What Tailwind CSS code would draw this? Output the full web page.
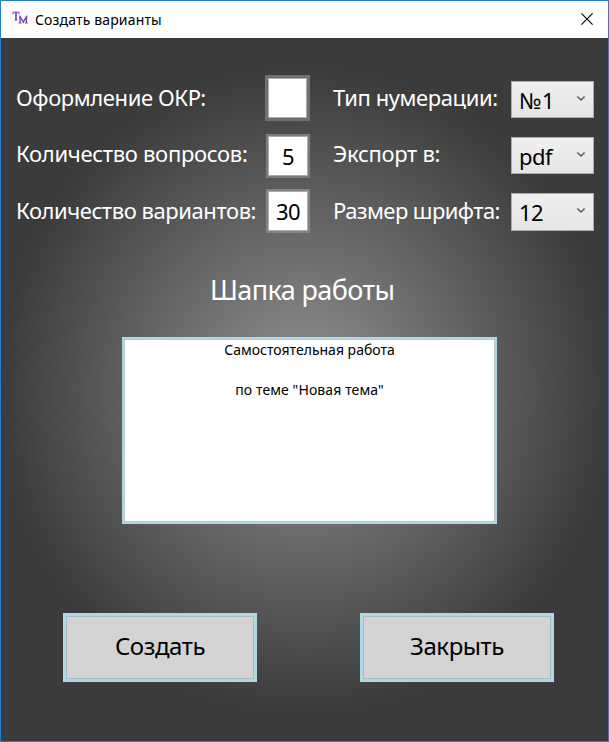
<!DOCTYPE html>
<html lang="ru"><head><meta charset="utf-8"><title>Создать варианты</title>
<script src="https://cdn.jsdelivr.net/npm/@tailwindcss/browser@4"></script></head>
<body class="h-[742px] w-[609px] overflow-hidden font-['Noto_Sans',sans-serif]">
<div class="flex h-[742px] w-[609px] flex-col border border-[#1c82d8]">
<header class="flex h-[37px] shrink-0 items-center bg-white pl-[11px] pr-[15px]">
<svg class="-mt-[3px] mr-[7px] h-[14px] w-4 shrink-0" viewBox="0 0 16 14" fill="none" stroke="#7b45b5"><path d="M1 3.5V1.2H7V3.5M2.5 9H5.5" /><path stroke-width="1.7" d="M4 1V9"/><path stroke-width="1.4" d="M8 5.5L11.3 11L14.5 5.5M8 5V12M14.4 5V12"/><path d="M6.5 12H9.5M12.8 12H15.7M7 5.2H8.5M14 5.2H15.6"/></svg>
<h1 class="whitespace-nowrap text-[14px] leading-5 tracking-[0.15px]">Создать варианты</h1>
<svg class="-mt-px ml-auto h-3 w-3" viewBox="0 0 12 12" stroke="#000" stroke-width="1.1"><path d="M.4 .4L11.6 11.6M11.6 .4L.4 11.6"/></svg>
</header>
<main class="flex min-h-0 flex-1 flex-col bg-[radial-gradient(ellipse_306px_322px_at_50%_50%,#929292,#3b3b3b)]">
<section class="grid h-[198px] grid-cols-[249px_69px_177px_84px] grid-rows-[57px_57px_57px] items-start whitespace-nowrap pl-[15px] pt-[36px] text-[22px] leading-[30px] tracking-[-0.5px] text-white">
<label class="mt-[8px] tracking-[-0.4px]">Оформление ОКР:</label>
<div class="mt-px h-[46px] w-[45px] border-[3px] border-[#707070] bg-white"><div class="h-full border border-[#ababab]"></div></div>
<label class="-ml-px mt-[8px] tracking-[-0.4px]">Тип нумерации:</label>
<div class="mt-[7px] flex h-[37px] w-[83px] items-center justify-between border border-[#acacac] bg-linear-to-b from-[#f0f0f0] to-[#e5e5e5] pl-[7px] pr-2 text-black"><span class="tracking-[0.5px]">№1</span><svg class="mb-1 h-2 w-2" viewBox="0 0 8 8" fill="none" stroke="#606060" stroke-width="1.6"><path d="M.4 2.5L4 6L7.6 2.5"/></svg></div>
<label class="mt-[7px] tracking-[-0.3px]">Количество вопросов:</label>
<div class="ml-px mt-[3px] h-11 w-11 border-2 border-[#7b7b7b]"><div class="h-full border border-[#ababab] bg-white pt-1 text-center text-black">5</div></div>
<label class="-ml-px mt-[7px] tracking-[-0.3px]">Экспорт в:</label>
<div class="mt-[6px] flex h-[37px] w-[83px] items-center justify-between border border-[#acacac] bg-linear-to-b from-[#f0f0f0] to-[#e5e5e5] pl-[7px] pr-2 text-black"><span>pdf</span><svg class="mb-1 h-2 w-2" viewBox="0 0 8 8" fill="none" stroke="#606060" stroke-width="1.6"><path d="M.4 2.5L4 6L7.6 2.5"/></svg></div>
<label class="mt-[7px] tracking-[-0.43px]">Количество вариантов:</label>
<div class="ml-px mt-px h-11 w-11 border-2 border-[#858585]"><div class="h-full border border-[#ababab] bg-white pt-1 text-center text-black">30</div></div>
<label class="-ml-px mt-[7px] tracking-[-0.57px]">Размер шрифта:</label>
<div class="mt-[5px] flex h-[38px] w-[83px] items-center justify-between border border-[#acacac] bg-linear-to-b from-[#f0f0f0] to-[#e5e5e5] pl-[7px] pr-2 text-black"><span>12</span><svg class="mb-1 h-2 w-2" viewBox="0 0 8 8" fill="none" stroke="#606060" stroke-width="1.6"><path d="M.4 2.5L4 6L7.6 2.5"/></svg></div>
</section>
<h2 class="mt-[35px] h-[66px] pl-[209px] text-[27px] leading-[38px] tracking-[-0.6px] text-white">Шапка работы</h2>
<div class="ml-[121px] h-[187px] w-[375px] border-2 border-[#add8e6]"><div class="h-full border border-[#b8c8cc] bg-white pt-0 text-center text-[14px] leading-5"><p>Самостоятельная работа</p><p class="mt-5 tracking-[0.1px]">по теме "Новая тема"</p></div></div>
<div class="ml-[62px] mt-[89px] flex gap-[103px] text-[24px] leading-[34px] tracking-[-0.45px]">
<button class="h-[69px] w-[194px] border-[3px] border-[#add8e6]"><span class="flex h-full items-center justify-center border border-[#a9b9be] bg-[#d3d3d3] pb-1">Создать</span></button>
<button class="h-[69px] w-[194px] border-[3px] border-[#add8e6]"><span class="flex h-full items-center justify-center border border-[#a9b9be] bg-[#d3d3d3] pb-1">Закрыть</span></button>
</div>
</main></div></body></html>
